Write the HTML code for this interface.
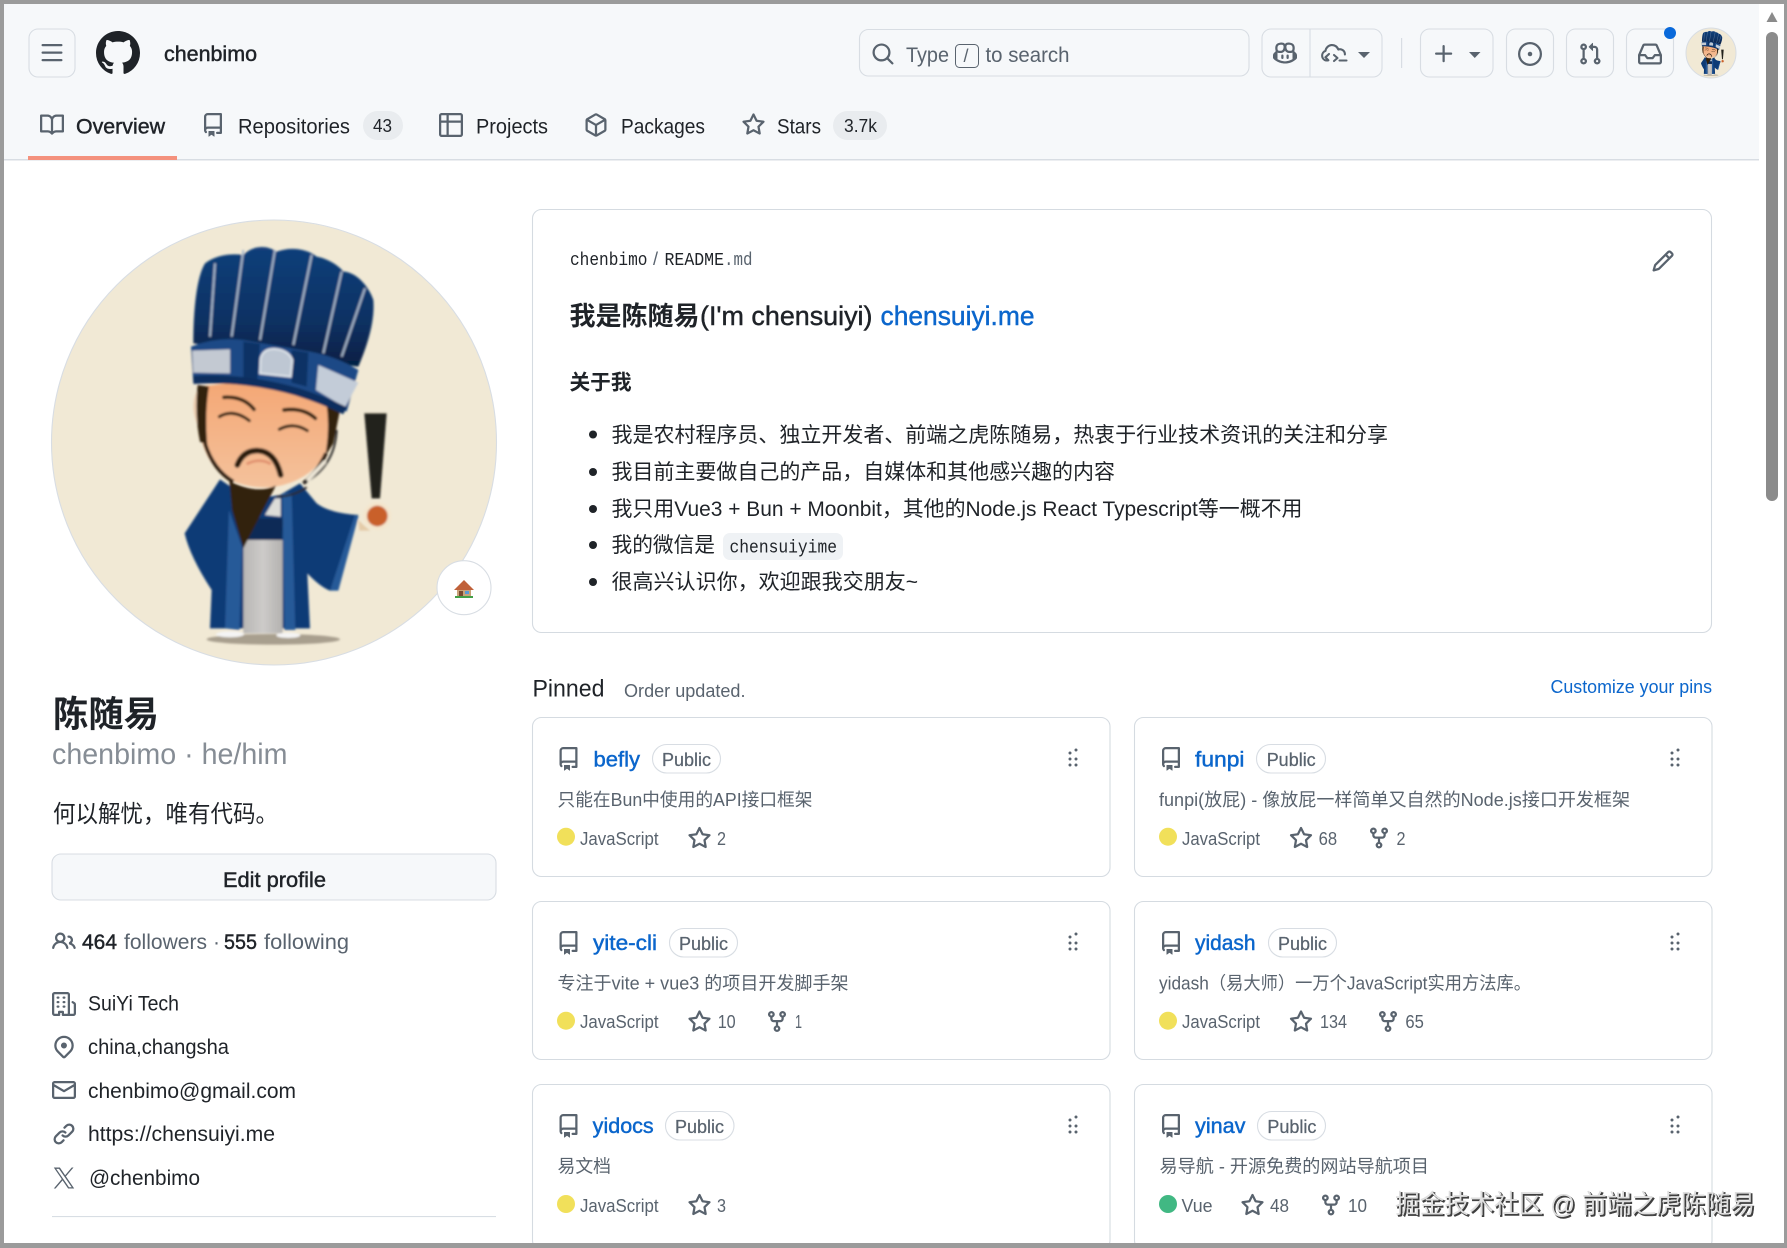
<!DOCTYPE html>
<html lang="zh"><head><meta charset="utf-8"><title>chenbimo</title>
<style>
html,body{margin:0;padding:0;background:#fff;width:1787px;height:1248px;overflow:hidden}
svg{display:block;filter:blur(.35px)}
text{font-family:"Liberation Sans","Noto Sans CJK SC",sans-serif;font-size:21px;fill:#1f2328}
.mono{font-family:"Liberation Mono","Noto Sans CJK SC",monospace;font-size:18px}
.s18{font-size:18px}
.mut{fill:#59636e}
.lnk{fill:#0b66cc}
.sb{stroke:#1f2328;stroke-width:.45}
.nm{fill:#0b66cc;stroke:#0b66cc;stroke-width:.45}
.pub{font-size:18px;fill:#59636e;stroke:#59636e;stroke-width:.25}
.box{fill:#f6f8fa;stroke:#d8dde3;stroke-width:1.1}
.card{fill:#fff;stroke:#d5dbe1;stroke-width:1.1}
.pill{fill:#fff;stroke:#d8dde3;stroke-width:1.1}
.ic{fill:#59636e}
</style></head><body>
<svg width="1787" height="1248" viewBox="0 0 1787 1248">
<defs>
<symbol id="i-mark" viewBox="0 0 16 16"><path d="M8 0c4.42 0 8 3.58 8 8a8.013 8.013 0 0 1-5.45 7.59c-.4.08-.55-.17-.55-.38 0-.27.01-1.13.01-2.2 0-.75-.25-1.23-.54-1.48 1.78-.2 3.65-.88 3.65-3.95 0-.88-.31-1.59-.82-2.15.08-.2.36-1.02-.08-2.12 0 0-.67-.22-2.2.82-.64-.18-1.32-.27-2-.27-.68 0-1.36.09-2 .27-1.53-1.03-2.2-.82-2.2-.82-.44 1.1-.16 1.92-.08 2.12-.51.56-.82 1.28-.82 2.15 0 3.06 1.86 3.75 3.64 3.95-.23.2-.44.55-.51 1.07-.46.21-1.61.55-2.33-.66-.15-.24-.6-.83-1.23-.82-.67.01-.27.38.01.53.34.19.73.9.82 1.13.16.45.68 1.31 2.69.94 0 .67.01 1.3.01 1.49 0 .21-.15.45-.55.38A7.995 7.995 0 0 1 0 8c0-4.42 3.58-8 8-8Z"/></symbol>
<symbol id="i-bars" viewBox="0 0 16 16"><path d="M1 2.75A.75.75 0 0 1 1.75 2h12.5a.75.75 0 0 1 0 1.5H1.75A.75.75 0 0 1 1 2.75Zm0 5A.75.75 0 0 1 1.75 7h12.5a.75.75 0 0 1 0 1.5H1.75A.75.75 0 0 1 1 7.75ZM1.75 12h12.5a.75.75 0 0 1 0 1.5H1.75a.75.75 0 0 1 0-1.5Z"/></symbol>
<symbol id="i-book" viewBox="0 0 16 16"><path d="M0 1.75A.75.75 0 0 1 .75 1h4.253c1.227 0 2.317.59 3 1.501A3.743 3.743 0 0 1 11.006 1h4.245a.75.75 0 0 1 .75.75v10.5a.75.75 0 0 1-.75.75h-4.507a2.25 2.25 0 0 0-1.591.659l-.622.621a.75.75 0 0 1-1.06 0l-.622-.621A2.25 2.25 0 0 0 5.258 13H.75a.75.75 0 0 1-.75-.75Zm7.251 10.324.004-5.073-.002-2.253A2.25 2.25 0 0 0 5.003 2.5H1.5v9h3.757a3.75 3.75 0 0 1 1.994.574ZM8.755 4.75l-.004 7.322a3.752 3.752 0 0 1 1.992-.572H14.5v-9h-3.495a2.25 2.25 0 0 0-2.25 2.25Z"/></symbol>
<symbol id="i-repo" viewBox="0 0 16 16"><path d="M2 2.5A2.5 2.5 0 0 1 4.5 0h8.75a.75.75 0 0 1 .75.75v12.5a.75.75 0 0 1-.75.75h-2.5a.75.75 0 0 1 0-1.5h1.75v-2h-8a1 1 0 0 0-.714 1.7.75.75 0 1 1-1.072 1.05A2.495 2.495 0 0 1 2 11.5Zm10.5-1h-8a1 1 0 0 0-1 1v6.708A2.486 2.486 0 0 1 4.5 9h8ZM5 12.25a.25.25 0 0 1 .25-.25h3.5a.25.25 0 0 1 .25.25v3.25a.25.25 0 0 1-.4.2l-1.45-1.087a.249.249 0 0 0-.3 0L5.4 15.7a.25.25 0 0 1-.4-.2Z"/></symbol>
<symbol id="i-table" viewBox="0 0 16 16"><path d="M0 1.75C0 .784.784 0 1.75 0h12.5C15.216 0 16 .784 16 1.75v12.5A1.75 1.75 0 0 1 14.25 16H1.75A1.75 1.75 0 0 1 0 14.25ZM6.5 6.5v8h7.75a.25.25 0 0 0 .25-.25V6.5Zm8-1.5V1.75a.25.25 0 0 0-.25-.25H6.5V5Zm-13 1.5v7.75c0 .138.112.25.25.25H5v-8ZM5 5V1.5H1.75a.25.25 0 0 0-.25.25V5Z"/></symbol>
<symbol id="i-pkg" viewBox="0 0 16 16"><path d="m8.878.392 5.25 3.045c.54.314.872.89.872 1.514v6.098a1.75 1.75 0 0 1-.872 1.514l-5.25 3.045a1.75 1.75 0 0 1-1.756 0l-5.25-3.045A1.75 1.75 0 0 1 1 11.049V4.951c0-.624.332-1.201.872-1.514L7.122.392a1.75 1.75 0 0 1 1.756 0ZM7.875 1.69l-4.63 2.685L8 7.133l4.755-2.758-4.63-2.685a.248.248 0 0 0-.25 0ZM2.5 5.677v5.372c0 .09.047.171.125.216l4.625 2.683V8.432Zm6.25 8.271 4.625-2.683a.25.25 0 0 0 .125-.216V5.677L8.75 8.432Z"/></symbol>
<symbol id="i-star" viewBox="0 0 16 16"><path d="M8 .25a.75.75 0 0 1 .673.418l1.882 3.815 4.21.612a.75.75 0 0 1 .416 1.279l-3.046 2.97.719 4.192a.751.751 0 0 1-1.088.791L8 12.347l-3.766 1.98a.75.75 0 0 1-1.088-.79l.72-4.194L.818 6.374a.75.75 0 0 1 .416-1.28l4.21-.611L7.327.668A.75.75 0 0 1 8 .25Zm0 2.445L6.615 5.5a.75.75 0 0 1-.564.41l-3.097.45 2.24 2.184a.75.75 0 0 1 .216.664l-.528 3.084 2.769-1.456a.75.75 0 0 1 .698 0l2.77 1.456-.53-3.084a.75.75 0 0 1 .216-.664l2.24-2.183-3.096-.45a.75.75 0 0 1-.564-.41L8 2.694Z"/></symbol>
<symbol id="i-search" viewBox="0 0 16 16"><path d="M10.68 11.74a6 6 0 0 1-7.922-8.982 6 6 0 0 1 8.982 7.922l3.04 3.04a.749.749 0 0 1-.326 1.275.749.749 0 0 1-.734-.215ZM11.5 7a4.499 4.499 0 1 0-8.997 0A4.499 4.499 0 0 0 11.5 7Z"/></symbol>
<symbol id="i-copilot" viewBox="0 0 16 16"><path d="M7.998 15.035c-4.562 0-7.873-2.914-7.998-3.749V9.338c.085-.628.677-1.686 1.588-2.065.013-.07.024-.143.036-.218.029-.183.06-.384.126-.612-.201-.508-.254-1.084-.254-1.656 0-.87.128-1.769.693-2.484.579-.733 1.494-1.124 2.724-1.261 1.206-.134 2.262.034 2.944.765.05.053.096.108.139.165.044-.057.094-.112.143-.165.682-.731 1.738-.899 2.944-.765 1.23.137 2.145.528 2.724 1.261.566.715.693 1.614.693 2.484 0 .572-.053 1.148-.254 1.656.066.228.098.429.126.612.012.076.024.148.037.218.924.385 1.522 1.471 1.591 2.095v1.872c0 .766-3.351 3.795-8.002 3.795Zm0-1.485c2.28 0 4.584-1.11 5.002-1.433V7.862l-.023-.116c-.49.21-1.075.291-1.727.291-1.146 0-2.059-.327-2.71-.991A3.222 3.222 0 0 1 8 6.303a3.24 3.24 0 0 1-.544.743c-.65.664-1.563.991-2.71.991-.652 0-1.236-.081-1.727-.291l-.023.116v4.255c.419.323 2.722 1.433 5.002 1.433ZM6.762 2.83c-.193-.206-.637-.413-1.682-.297-1.019.113-1.479.404-1.713.7-.247.312-.369.789-.369 1.554 0 .793.129 1.171.308 1.371.162.181.519.379 1.442.379.853 0 1.339-.235 1.638-.54.315-.322.527-.827.617-1.553.117-.935-.037-1.395-.241-1.614Zm4.155-.297c-1.044-.116-1.488.091-1.681.297-.204.219-.359.679-.242 1.614.091.726.303 1.231.618 1.553.299.305.784.54 1.638.54.922 0 1.28-.198 1.442-.379.179-.2.308-.578.308-1.371 0-.765-.123-1.242-.37-1.554-.233-.296-.693-.587-1.713-.7Z"/><path d="M6.25 9.037a.75.75 0 0 1 .75.75v1.501a.75.75 0 0 1-1.5 0V9.787a.75.75 0 0 1 .75-.75Zm4.25.75v1.501a.75.75 0 0 1-1.5 0V9.787a.75.75 0 0 1 1.5 0Z"/></symbol>
<symbol id="i-plus" viewBox="0 0 16 16"><path d="M7.75 2a.75.75 0 0 1 .75.75V7h4.25a.75.75 0 0 1 0 1.5H8.5v4.25a.75.75 0 0 1-1.5 0V8.5H2.75a.75.75 0 0 1 0-1.5H7V2.75A.75.75 0 0 1 7.75 2Z"/></symbol>
<symbol id="i-issue" viewBox="0 0 16 16"><path d="M8 9.5a1.5 1.5 0 1 0 0-3 1.5 1.5 0 0 0 0 3Z"/><path d="M8 0a8 8 0 1 1 0 16A8 8 0 0 1 8 0ZM1.5 8a6.5 6.5 0 1 0 13 0 6.5 6.5 0 0 0-13 0Z"/></symbol>
<symbol id="i-pr" viewBox="0 0 16 16"><path d="M1.5 3.25a2.25 2.25 0 1 1 3 2.122v5.256a2.251 2.251 0 1 1-1.5 0V5.372A2.25 2.25 0 0 1 1.5 3.25Zm5.677-.177L9.573.677A.25.25 0 0 1 10 .854V2.5h1A2.5 2.5 0 0 1 13.5 5v5.628a2.251 2.251 0 1 1-1.5 0V5a1 1 0 0 0-1-1h-1v1.646a.25.25 0 0 1-.427.177L7.177 3.427a.25.25 0 0 1 0-.354ZM3.75 2.5a.75.75 0 1 0 0 1.5.75.75 0 0 0 0-1.5Zm0 9.5a.75.75 0 1 0 0 1.5.75.75 0 0 0 0-1.5Zm8.25.75a.75.75 0 1 0 1.5 0 .75.75 0 0 0-1.5 0Z"/></symbol>
<symbol id="i-inbox" viewBox="0 0 16 16"><path d="M2.8 2.06A1.75 1.75 0 0 1 4.41 1h7.18c.7 0 1.333.417 1.61 1.06l2.74 6.395c.04.093.06.194.06.295v4.5A1.75 1.75 0 0 1 14.25 15H1.75A1.75 1.75 0 0 1 0 13.25v-4.5c0-.101.02-.202.06-.295Zm1.61.44a.25.25 0 0 0-.23.152L1.887 8H4.75a.75.75 0 0 1 .6.3L6.625 10h2.75l1.275-1.7a.75.75 0 0 1 .6-.3h2.863L11.82 2.652a.25.25 0 0 0-.23-.152Zm10.09 7h-2.875l-1.275 1.7a.75.75 0 0 1-.6.3h-3.5a.75.75 0 0 1-.6-.3L4.375 9.5H1.5v3.75c0 .138.112.25.25.25h12.5a.25.25 0 0 0 .25-.25Z"/></symbol>
<symbol id="i-people" viewBox="0 0 16 16"><path d="M2 5.5a3.5 3.5 0 1 1 5.898 2.549 5.508 5.508 0 0 1 3.034 4.084.75.75 0 1 1-1.482.235 4 4 0 0 0-7.9 0 .75.75 0 0 1-1.482-.236A5.507 5.507 0 0 1 3.102 8.05 3.493 3.493 0 0 1 2 5.5ZM11 4a3.001 3.001 0 0 1 2.22 5.018 5.01 5.01 0 0 1 2.56 3.012.749.749 0 0 1-.885.954.752.752 0 0 1-.549-.514 3.507 3.507 0 0 0-2.522-2.372.75.75 0 0 1-.574-.73v-.352a.75.75 0 0 1 .416-.672A1.5 1.5 0 0 0 11 5.5.75.75 0 0 1 11 4Zm-5.5-.5a2 2 0 1 0-.001 3.999A2 2 0 0 0 5.5 3.5Z"/></symbol>
<symbol id="i-org" viewBox="0 0 16 16"><path d="M1.75 16A1.75 1.75 0 0 1 0 14.25V1.75C0 .784.784 0 1.75 0h8.5C11.216 0 12 .784 12 1.75v12.5c0 .085-.006.168-.018.25h2.268a.25.25 0 0 0 .25-.25V8.285a.25.25 0 0 0-.111-.208l-1.055-.703a.749.749 0 1 1 .832-1.248l1.055.703c.487.325.779.871.779 1.456v5.965A1.75 1.75 0 0 1 14.25 16h-3.5a.766.766 0 0 1-.197-.026c-.099.017-.2.026-.303.026h-3a.75.75 0 0 1-.75-.75V14h-1v1.25a.75.75 0 0 1-.75.75Zm-.25-1.75c0 .138.112.25.25.25H4v-1.25a.75.75 0 0 1 .75-.75h2.5a.75.75 0 0 1 .75.75v1.25h2.25a.25.25 0 0 0 .25-.25V1.75a.25.25 0 0 0-.25-.25h-8.5a.25.25 0 0 0-.25.25ZM3.75 6h.5a.75.75 0 0 1 0 1.5h-.5a.75.75 0 0 1 0-1.5ZM3 3.75A.75.75 0 0 1 3.75 3h.5a.75.75 0 0 1 0 1.5h-.5A.75.75 0 0 1 3 3.75Zm4 3A.75.75 0 0 1 7.75 6h.5a.75.75 0 0 1 0 1.5h-.5A.75.75 0 0 1 7 6.75ZM7.75 3h.5a.75.75 0 0 1 0 1.5h-.5a.75.75 0 0 1 0-1.5ZM3 9.75A.75.75 0 0 1 3.75 9h.5a.75.75 0 0 1 0 1.5h-.5A.75.75 0 0 1 3 9.75ZM7.75 9h.5a.75.75 0 0 1 0 1.5h-.5a.75.75 0 0 1 0-1.5Z"/></symbol>
<symbol id="i-loc" viewBox="0 0 16 16"><path d="m12.596 11.596-3.535 3.536a1.5 1.5 0 0 1-2.122 0l-3.535-3.536a6.5 6.5 0 1 1 9.192-9.193 6.5 6.5 0 0 1 0 9.193Zm-1.06-8.132v-.001a5 5 0 1 0-7.072 7.072L8 14.07l3.536-3.534a5 5 0 0 0 0-7.072ZM8 9a2 2 0 1 1-.001-3.999A2 2 0 0 1 8 9Z"/></symbol>
<symbol id="i-mail" viewBox="0 0 16 16"><path d="M1.75 2h12.5c.966 0 1.75.784 1.75 1.75v8.5A1.75 1.75 0 0 1 14.25 14H1.75A1.75 1.75 0 0 1 0 12.25v-8.5C0 2.784.784 2 1.75 2ZM1.5 12.251c0 .138.112.25.25.25h12.5a.25.25 0 0 0 .25-.25V5.809L8.38 9.397a.75.75 0 0 1-.76 0L1.5 5.809v6.442Zm13-8.181v-.32a.25.25 0 0 0-.25-.25H1.75a.25.25 0 0 0-.25.25v.32L8 7.88Z"/></symbol>
<symbol id="i-link" viewBox="0 0 16 16"><path d="m7.775 3.275 1.25-1.25a3.5 3.5 0 1 1 4.95 4.95l-2.5 2.5a3.5 3.5 0 0 1-4.95 0 .751.751 0 0 1 .018-1.042.751.751 0 0 1 1.042-.018 1.998 1.998 0 0 0 2.83 0l2.5-2.5a2.002 2.002 0 0 0-2.83-2.83l-1.25 1.25a.751.751 0 0 1-1.042-.018.751.751 0 0 1-.018-1.042Zm-4.69 9.64a1.998 1.998 0 0 0 2.83 0l1.25-1.25a.751.751 0 0 1 1.042.018.751.751 0 0 1 .018 1.042l-1.25 1.25a3.5 3.5 0 1 1-4.95-4.95l2.5-2.5a3.5 3.5 0 0 1 4.95 0 .751.751 0 0 1-.018 1.042.751.751 0 0 1-1.042.018 1.998 1.998 0 0 0-2.83 0l-2.5 2.5a1.998 1.998 0 0 0 0 2.83Z"/></symbol>
<symbol id="i-x" viewBox="0 0 16 16"><path d="M9.294 6.928 14.357 1h-1.2L8.762 6.147 5.25 1H1.2l5.31 7.784L1.2 15h1.2l4.642-5.436L10.751 15h4.05L9.294 6.928ZM7.651 8.852l-.538-.775L2.832 1.91h1.843l3.454 4.977.538.775 4.491 6.47h-1.843l-3.664-5.28Z"/></symbol>
<symbol id="i-pen" viewBox="0 0 16 16"><path d="M11.013 1.427a1.75 1.75 0 0 1 2.474 0l1.086 1.086a1.75 1.75 0 0 1 0 2.474l-8.61 8.61c-.21.21-.47.364-.756.445l-3.251.93a.75.75 0 0 1-.927-.928l.929-3.25c.081-.286.235-.547.445-.758l8.61-8.61Zm.176 4.823L9.75 4.81l-6.286 6.287a.253.253 0 0 0-.064.108l-.558 1.953 1.953-.558a.253.253 0 0 0 .108-.064Zm1.238-3.763a.25.25 0 0 0-.354 0L10.811 3.75l1.439 1.44 1.263-1.263a.25.25 0 0 0 0-.354Z"/></symbol>
<symbol id="i-grab" viewBox="0 0 16 16"><path d="M10 13a1 1 0 1 1 0-2 1 1 0 0 1 0 2Zm0-4a1 1 0 1 1 0-2 1 1 0 0 1 0 2Zm-4 0a1 1 0 1 1 0-2 1 1 0 0 1 0 2Zm1 3a1 1 0 1 1-2 0 1 1 0 0 1 2 0Zm3-9a1 1 0 1 1 0-2 1 1 0 0 1 0 2ZM6 5a1 1 0 1 1 0-2 1 1 0 0 1 0 2Z"/></symbol>
<symbol id="i-fork" viewBox="0 0 16 16"><path d="M5 5.372v.878c0 .414.336.75.75.75h4.5a.75.75 0 0 0 .75-.75v-.878a2.25 2.25 0 1 1 1.5 0v.878a2.25 2.25 0 0 1-2.25 2.25h-1.5v2.128a2.251 2.251 0 1 1-1.5 0V8.5h-1.5A2.25 2.25 0 0 1 3.5 6.25v-.878a2.25 2.25 0 1 1 1.5 0ZM5 3.25a.75.75 0 1 0-1.5 0 .75.75 0 0 0 1.5 0Zm6.75.75a.75.75 0 1 0 0-1.5.75.75 0 0 0 0 1.5Zm-3 8.75a.75.75 0 1 0-1.5 0 .75.75 0 0 0 1.5 0Z"/></symbol>
<linearGradient id="hatg" x1="0" y1="0" x2="0" y2="1"><stop offset="0" stop-color="#123f7a"/><stop offset=".6" stop-color="#0c3264"/><stop offset="1" stop-color="#061f44"/></linearGradient>
<linearGradient id="shirt" x1="0" y1="0" x2="1" y2="0"><stop offset="0" stop-color="#b8b6b4"/><stop offset=".5" stop-color="#cdcbc9"/><stop offset="1" stop-color="#b3b1af"/></linearGradient>
<linearGradient id="skin" x1="0" y1="0" x2="0" y2="1"><stop offset="0" stop-color="#f4a775"/><stop offset="1" stop-color="#f4c29c"/></linearGradient>
<filter id="soft"><feGaussianBlur stdDeviation="3"/></filter>
<g id="avatar">
<circle cx="732" cy="728" r="667" fill="#f1e9d5"/>
<g filter="url(#soft)">
<ellipse cx="730" cy="1318" rx="200" ry="16" fill="#a89f8e"/>
<path d="M570 838L464 1000Q480 1070 545 1170L540 1285L840 1285L832 1120Q870 1160 900 1172L925 1170L985 945Q900 940 860 910L810 850L750 885L660 900Z" fill="#103b76"/>
<rect x="640" y="1020" width="118" height="280" fill="url(#shirt)"/>
<path d="M705 945L735 895L752 895L752 950Z" fill="#dcdcd8"/>
<path d="M660 955L760 955L755 1020L645 1020Z" fill="#0a2a56"/>
<path d="M597 930L636 1040L628 1290L585 1285Z" fill="#285a98"/>
<path d="M757 880L785 880L796 1290L764 1290Z" fill="#285a98"/>
<path d="M975 945L985 950L925 1172L900 1172Z" fill="#285a98"/>
<ellipse cx="600" cy="1303" rx="42" ry="9" fill="#f4f4f4"/><ellipse cx="775" cy="1306" rx="36" ry="8" fill="#f4f4f4"/>
<path d="M985 960Q1010 985 1022 992L988 992Z" fill="#e4cba8"/>
<path d="M505 565Q472 620 512 695Z" fill="#ecccae"/>
<path d="M510 560L510 700Q530 800 600 840Q680 875 760 855Q850 830 885 760Q920 700 920 630L800 570L640 545Z" fill="url(#skin)"/>
<path d="M503 555L537 560Q524 640 532 735L510 725Q493 640 503 555Z" fill="#33200f"/>
<path d="M930 630L910 730L885 770Q900 690 890 618Z" fill="#33200f"/>
<path d="M525 730Q550 810 610 845M888 760Q860 820 820 850" fill="none" stroke="#2a1a0e" stroke-width="11"/>
<path d="M598 843Q680 885 738 856L640 1045L606 930Z" fill="#33200f"/>
<path d="M582 592Q640 588 672 628M762 630Q820 622 856 655" fill="none" stroke="#33200f" stroke-width="11" stroke-linecap="round"/>
<path d="M568 650Q610 625 658 662M748 688Q790 665 832 692" fill="none" stroke="#33200f" stroke-width="9" stroke-linecap="round"/>
<path d="M650 792Q690 772 722 792" fill="none" stroke="#e0906e" stroke-width="8"/>
<path d="M622 795Q640 750 685 752Q735 755 752 825" fill="none" stroke="#2a1a0e" stroke-width="17" stroke-linecap="round"/>
<path d="M920 690Q915 800 820 850M740 890Q790 890 830 862" fill="none" stroke="#2a2a2a" stroke-width="6"/>
<path d="M885 785L832 842" fill="none" stroke="#efe8d8" stroke-width="11"/>
<path d="M490 430C490 330 500 230 525 190C560 165 600 160 640 165C670 135 710 135 740 155C780 140 830 145 860 170C890 175 925 195 940 215C975 215 1015 255 1030 300C1035 360 1015 430 985 500L490 430Z" fill="url(#hatg)"/>
<path d="M555 190L540 410M640 150L605 410M735 150L690 420M845 165L790 435M935 215L880 460M1005 265L935 470" fill="none" stroke="#a9b8cb" stroke-width="6"/>
<path d="M483 440Q560 410 640 420L840 455Q920 470 985 510L950 635Q800 560 640 545Q560 540 490 550Z" fill="#1c4a86"/>
<path d="M640 425L690 432L682 540L640 540ZM785 450L835 458L830 560L785 548Z" fill="#0f3365"/>
<path d="M487 452L600 448L600 520L490 518Z" fill="#c3c9d2"/>
<path d="M690 520L692 475Q700 445 735 447Q775 450 787 480L782 530Z" fill="#bec7d3" stroke="#dfe4ea" stroke-width="6"/>
<path d="M865 495L985 548L945 622L858 570Z" fill="#c3ccd8"/>
<path d="M490 540Q640 530 800 575Q880 600 945 632" fill="none" stroke="#0e2f5f" stroke-width="24"/>
<path d="M1003 640L1070 640L1050 895L1025 895Z" fill="#22211e"/>
<circle cx="1042" cy="948" r="42" fill="#f4e6cd"/><circle cx="1042" cy="948" r="31" fill="#c9602a"/>
</g>
</g>
</defs>

<!-- window frame & header -->
<rect width="1787" height="1248" fill="#fff"/>
<rect x="4" y="4" width="1755" height="155" fill="#f6f8fa"/>
<rect x="4" y="159" width="1755" height="1.5" fill="#d8dde3"/>

<rect class="box" x="29" y="29" width="46" height="48" rx="9"/>
<use href="#i-bars" x="40" y="41" width="24" height="24" class="ic"/>
<use href="#i-mark" x="96" y="31" width="44" height="44" fill="#1f2328"/>
<text x="164" y="61" textLength="93" lengthAdjust="spacingAndGlyphs" class="sb">chenbimo</text>

<use href="#i-book" x="40" y="113" width="24" height="24" class="ic"/>
<text x="76" y="133.5" textLength="89" lengthAdjust="spacingAndGlyphs" class="sb">Overview</text>
<rect x="28" y="156" width="149" height="4" fill="#f4917d"/>
<use href="#i-repo" x="201" y="113" width="24" height="24" class="ic"/>
<text x="238" y="133.5" textLength="112" lengthAdjust="spacingAndGlyphs">Repositories</text>
<rect x="363" y="111" width="40" height="29" rx="14.5" fill="#e9ecef"/>
<text class="s18" x="373" y="132" textLength="19" lengthAdjust="spacingAndGlyphs">43</text>
<use href="#i-table" x="439" y="113" width="24" height="24" class="ic"/>
<text x="476" y="133.5" textLength="72" lengthAdjust="spacingAndGlyphs">Projects</text>
<use href="#i-pkg" x="584" y="113" width="24" height="24" class="ic"/>
<text x="621" y="133.5" textLength="84" lengthAdjust="spacingAndGlyphs">Packages</text>
<use href="#i-star" x="741.5" y="113" width="24" height="24" class="ic"/>
<text x="777" y="133.5" textLength="44" lengthAdjust="spacingAndGlyphs">Stars</text>
<rect x="833" y="111" width="54" height="29" rx="14.5" fill="#e9ecef"/>
<text class="s18" x="844" y="132" textLength="33" lengthAdjust="spacingAndGlyphs">3.7k</text>

<rect class="box" x="859.5" y="29.5" width="389.5" height="46.5" rx="9"/>
<use href="#i-search" x="871" y="42" width="24" height="24" class="ic"/>
<text class="mut" x="906" y="62" textLength="43" lengthAdjust="spacingAndGlyphs">Type</text>
<rect x="955.5" y="44.5" width="23" height="23" rx="4" fill="none" stroke="#59636e" stroke-width="1"/>
<text class="mut s18" x="963.5" y="62">/</text>
<text class="mut" x="985.5" y="62" textLength="84" lengthAdjust="spacingAndGlyphs">to search</text>

<rect class="box" x="1262" y="29" width="120" height="48" rx="9"/>
<line x1="1310" y1="29" x2="1310" y2="77" stroke="#d8dde3" stroke-width="1.1"/>
<use href="#i-copilot" x="1273" y="41" width="24" height="24" class="ic"/>
<path d="M1328 60.5h-2a5 5 0 0 1-.5-9.6a6.6 6.6 0 0 1 12.8-1.4a5 5 0 0 1 6.6 5M1329 54l-3.6 3.3 3 3M1334 55l3.5 3-3.5 3M1339.5 60.5h7" fill="none" stroke="#59636e" stroke-width="2.1" stroke-linecap="round" stroke-linejoin="round"/>
<path d="M1358 52h12l-6 6z" fill="#59636e"/>
<rect x="1401" y="38" width="1.2" height="30" fill="#d8dde3"/>
<rect class="box" x="1420.5" y="29" width="72.5" height="48" rx="9"/>
<use href="#i-plus" x="1432" y="42" width="24" height="24" class="ic"/>
<path d="M1469 52h11.5l-5.75 6z" fill="#59636e"/>
<rect class="box" x="1506.5" y="29" width="47" height="48" rx="9"/>
<use href="#i-issue" x="1518" y="42" width="24" height="24" class="ic"/>
<rect class="box" x="1566.5" y="29" width="47" height="48" rx="9"/>
<use href="#i-pr" x="1578" y="42" width="24" height="24" class="ic"/>
<rect class="box" x="1626.5" y="29" width="47" height="48" rx="9"/>
<use href="#i-inbox" x="1638" y="42" width="24" height="24" class="ic"/>
<circle cx="1670" cy="33" r="6" fill="#0969da"/>
<use href="#avatar" transform="translate(1683.6 25.7) scale(.03746)"/>
<circle cx="1711" cy="53" r="25" fill="none" stroke="#d8dde3" stroke-width="1"/>

<!-- sidebar -->
<use href="#avatar" transform="translate(30 200) scale(.33333)"/>
<circle cx="274" cy="442.5" r="222.5" fill="none" stroke="#d8dde3" stroke-width="1.1"/>
<circle cx="464" cy="587.7" r="27" fill="#fff" stroke="#d8dde3" stroke-width="1.1"/>
<path d="M457 589h14v8h-14z" fill="#c9a37a"/><path d="M464 580l10 10h-20z" fill="#c0613a"/><rect x="459" y="591" width="4" height="6" fill="#7a4a30"/><rect x="465" y="591" width="4" height="3" fill="#5a9bd5"/><rect x="455" y="596" width="18" height="2" fill="#43a047"/>

<text x="53" y="726.5" font-weight="700" style="font-size:36px" textLength="106" lengthAdjust="spacingAndGlyphs">陈随易</text>
<text x="52" y="764" style="font-size:30px;fill:#868d95" textLength="235.5" lengthAdjust="spacingAndGlyphs">chenbimo · he/him</text>
<text x="53" y="822" style="font-size:24px" textLength="225" lengthAdjust="spacingAndGlyphs">何以解忧，唯有代码。</text>
<rect class="box" x="52" y="854" width="444" height="46" rx="9"/>
<text x="223" y="887" textLength="103" lengthAdjust="spacingAndGlyphs" class="sb">Edit profile</text>
<use href="#i-people" x="52" y="929.5" width="24" height="24" class="ic"/>
<text x="82" y="949" textLength="35" lengthAdjust="spacingAndGlyphs" class="sb">464</text>
<text class="mut" x="124" y="949" textLength="83" lengthAdjust="spacingAndGlyphs">followers</text>
<text class="mut" x="213" y="949">·</text>
<text x="224" y="949" textLength="33" lengthAdjust="spacingAndGlyphs" class="sb">555</text>
<text class="mut" x="264" y="949" textLength="85" lengthAdjust="spacingAndGlyphs">following</text>
<use href="#i-org" x="52" y="992" width="24" height="24" class="ic"/>
<text x="88" y="1010.5" textLength="91" lengthAdjust="spacingAndGlyphs">SuiYi Tech</text>
<use href="#i-loc" x="52" y="1035" width="24" height="24" class="ic"/>
<text x="88" y="1054" textLength="141" lengthAdjust="spacingAndGlyphs">china,changsha</text>
<use href="#i-mail" x="52" y="1078" width="24" height="24" class="ic"/>
<text x="88" y="1098" textLength="208" lengthAdjust="spacingAndGlyphs">chenbimo@gmail.com</text>
<use href="#i-link" x="52" y="1122" width="24" height="24" class="ic"/>
<text x="88" y="1141" textLength="187" lengthAdjust="spacingAndGlyphs">https://chensuiyi.me</text>
<use href="#i-x" x="52" y="1166" width="24" height="24" class="ic"/>
<text x="89" y="1185" textLength="111" lengthAdjust="spacingAndGlyphs">@chenbimo</text>
<rect x="52" y="1216" width="444" height="1.1" fill="#d8dee4"/>

<!-- README -->
<rect class="card" x="532.5" y="209.5" width="1179" height="423" rx="9"/>
<text class="mono" x="570" y="265" textLength="77.5" lengthAdjust="spacingAndGlyphs">chenbimo</text>
<text x="653" y="265" class="s18 mut">/</text>
<text class="mono" x="664.5" y="265" textLength="59.5" lengthAdjust="spacingAndGlyphs">README</text>
<text class="mono" x="724" y="265" style="fill:#59636e" textLength="28.5" lengthAdjust="spacingAndGlyphs">.md</text>
<use href="#i-pen" x="1651" y="249" width="24" height="24" class="ic"/>
<text x="569.5" y="325" font-weight="700" style="font-size:26px" textLength="130" lengthAdjust="spacingAndGlyphs">我是陈随易</text>
<text x="700" y="325" style="font-size:27px" class="sb" textLength="172.5" lengthAdjust="spacingAndGlyphs">(I'm chensuiyi)</text>
<text x="880.5" y="325" style="font-size:27px" class="nm" textLength="154" lengthAdjust="spacingAndGlyphs">chensuiyi.me</text>
<text x="569.5" y="389.5" font-weight="700" textLength="62" lengthAdjust="spacingAndGlyphs">关于我</text>
<circle cx="593" cy="434.5" r="4" fill="#1f2328"/><circle cx="593" cy="472" r="4" fill="#1f2328"/><circle cx="593" cy="509" r="4" fill="#1f2328"/><circle cx="593" cy="545" r="4" fill="#1f2328"/><circle cx="593" cy="582" r="4" fill="#1f2328"/>
<text x="611.5" y="442" textLength="776.5" lengthAdjust="spacingAndGlyphs">我是农村程序员、独立开发者、前端之虎陈随易，热衷于行业技术资讯的关注和分享</text>
<text x="611.5" y="479" textLength="503.5" lengthAdjust="spacingAndGlyphs">我目前主要做自己的产品，自媒体和其他感兴趣的内容</text>
<text x="611.5" y="516" textLength="691" lengthAdjust="spacingAndGlyphs">我只用Vue3 + Bun + Moonbit，其他的Node.js React Typescript等一概不用</text>
<text x="611.5" y="552" textLength="103.5" lengthAdjust="spacingAndGlyphs">我的微信是</text>
<rect x="723" y="533" width="120" height="27" rx="7" fill="#eff2f5"/>
<text class="mono" x="729.5" y="552.5" textLength="107.5" lengthAdjust="spacingAndGlyphs">chensuiyime</text>
<text x="611.5" y="589" textLength="306.5" lengthAdjust="spacingAndGlyphs">很高兴认识你，欢迎跟我交朋友~</text>

<!-- pinned heading -->
<text x="532.5" y="696.5" style="font-size:24px" textLength="72" lengthAdjust="spacingAndGlyphs">Pinned</text>
<text class="s18 mut" x="624" y="697" textLength="121.5" lengthAdjust="spacingAndGlyphs">Order updated.</text>
<text class="s18 lnk" x="1550.5" y="693" textLength="161.5" lengthAdjust="spacingAndGlyphs">Customize your pins</text>

<!-- row 1 -->
<rect class="card" x="532.5" y="717.5" width="577.5" height="159" rx="9"/>
<use href="#i-repo" x="556.5" y="747" width="24" height="24" class="ic"/>
<text x="593.5" y="766.5" class="nm" textLength="46.5" lengthAdjust="spacingAndGlyphs">befly</text>
<rect class="pill" x="652.5" y="744.5" width="68" height="28.5" rx="14.25"/>
<text class="pub" x="662" y="766" textLength="49" lengthAdjust="spacingAndGlyphs">Public</text>
<use href="#i-grab" x="1061" y="747" width="24" height="24" class="ic"/>
<text class="s18 mut" x="557.5" y="806" textLength="255" lengthAdjust="spacingAndGlyphs">只能在Bun中使用的API接口框架</text>
<circle cx="566" cy="836.7" r="9" fill="#f1e05a"/>
<text class="s18 mut" x="580" y="845" textLength="78.5" lengthAdjust="spacingAndGlyphs">JavaScript</text>
<use href="#i-star" x="687.5" y="826.5" width="24" height="24" class="ic"/>
<text class="s18 mut" x="717" y="845" textLength="9" lengthAdjust="spacingAndGlyphs">2</text>

<rect class="card" x="1134.5" y="717.5" width="577.5" height="159" rx="9"/>
<use href="#i-repo" x="1159" y="747" width="24" height="24" class="ic"/>
<text x="1195" y="766.5" class="nm" textLength="49.5" lengthAdjust="spacingAndGlyphs">funpi</text>
<rect class="pill" x="1256.5" y="744.5" width="69" height="28.5" rx="14.25"/>
<text class="pub" x="1266.7" y="766" textLength="49" lengthAdjust="spacingAndGlyphs">Public</text>
<use href="#i-grab" x="1663" y="747" width="24" height="24" class="ic"/>
<text class="s18 mut" x="1159" y="806" textLength="471" lengthAdjust="spacingAndGlyphs">funpi(放屁) - 像放屁一样简单又自然的Node.js接口开发框架</text>
<circle cx="1168" cy="836.7" r="9" fill="#f1e05a"/>
<text class="s18 mut" x="1182" y="845" textLength="78" lengthAdjust="spacingAndGlyphs">JavaScript</text>
<use href="#i-star" x="1289" y="826.5" width="24" height="24" class="ic"/>
<text class="s18 mut" x="1318.6" y="845" textLength="18.5" lengthAdjust="spacingAndGlyphs">68</text>
<use href="#i-fork" x="1367" y="826" width="24" height="24" class="ic"/>
<text class="s18 mut" x="1396.5" y="845" textLength="9" lengthAdjust="spacingAndGlyphs">2</text>

<!-- row 2 -->
<rect class="card" x="532.5" y="901.5" width="577.5" height="158" rx="9"/>
<use href="#i-repo" x="556.5" y="931" width="24" height="24" class="ic"/>
<text x="593" y="950" class="nm" textLength="64" lengthAdjust="spacingAndGlyphs">yite-cli</text>
<rect class="pill" x="669.5" y="928.5" width="68" height="28.5" rx="14.25"/>
<text class="pub" x="679" y="950" textLength="49" lengthAdjust="spacingAndGlyphs">Public</text>
<use href="#i-grab" x="1061" y="931" width="24" height="24" class="ic"/>
<text class="s18 mut" x="557.5" y="989.5" textLength="291" lengthAdjust="spacingAndGlyphs">专注于vite + vue3 的项目开发脚手架</text>
<circle cx="566" cy="1020.7" r="9" fill="#f1e05a"/>
<text class="s18 mut" x="580" y="1028" textLength="78.5" lengthAdjust="spacingAndGlyphs">JavaScript</text>
<use href="#i-star" x="687.5" y="1010" width="24" height="24" class="ic"/>
<text class="s18 mut" x="717.7" y="1028" textLength="18" lengthAdjust="spacingAndGlyphs">10</text>
<use href="#i-fork" x="765" y="1009.5" width="24" height="24" class="ic"/>
<text class="s18 mut" x="795" y="1028" textLength="7" lengthAdjust="spacingAndGlyphs">1</text>

<rect class="card" x="1134.5" y="901.5" width="577.5" height="158" rx="9"/>
<use href="#i-repo" x="1159" y="931" width="24" height="24" class="ic"/>
<text x="1195" y="950" class="nm" textLength="60.5" lengthAdjust="spacingAndGlyphs">yidash</text>
<rect class="pill" x="1268.5" y="928.5" width="68" height="28.5" rx="14.25"/>
<text class="pub" x="1278" y="950" textLength="49" lengthAdjust="spacingAndGlyphs">Public</text>
<use href="#i-grab" x="1663" y="931" width="24" height="24" class="ic"/>
<text class="s18 mut" x="1159" y="989.5" textLength="372" lengthAdjust="spacingAndGlyphs">yidash（易大师）一万个JavaScript实用方法库。</text>
<circle cx="1168" cy="1020.7" r="9" fill="#f1e05a"/>
<text class="s18 mut" x="1182" y="1028" textLength="78" lengthAdjust="spacingAndGlyphs">JavaScript</text>
<use href="#i-star" x="1289" y="1010" width="24" height="24" class="ic"/>
<text class="s18 mut" x="1320" y="1028" textLength="27" lengthAdjust="spacingAndGlyphs">134</text>
<use href="#i-fork" x="1376" y="1009.5" width="24" height="24" class="ic"/>
<text class="s18 mut" x="1405.4" y="1028" textLength="18.5" lengthAdjust="spacingAndGlyphs">65</text>

<!-- row 3 -->
<rect class="card" x="532.5" y="1084.5" width="577.5" height="165" rx="9"/>
<use href="#i-repo" x="556.5" y="1114" width="24" height="24" class="ic"/>
<text x="592.7" y="1133" class="nm" textLength="61" lengthAdjust="spacingAndGlyphs">yidocs</text>
<rect class="pill" x="665.5" y="1111.5" width="68.5" height="28.5" rx="14.25"/>
<text class="pub" x="675" y="1133" textLength="49" lengthAdjust="spacingAndGlyphs">Public</text>
<use href="#i-grab" x="1061" y="1114" width="24" height="24" class="ic"/>
<text class="s18 mut" x="557.5" y="1172.5" textLength="53.5" lengthAdjust="spacingAndGlyphs">易文档</text>
<circle cx="566" cy="1204" r="9" fill="#f1e05a"/>
<text class="s18 mut" x="580" y="1212" textLength="78.5" lengthAdjust="spacingAndGlyphs">JavaScript</text>
<use href="#i-star" x="687.5" y="1193.5" width="24" height="24" class="ic"/>
<text class="s18 mut" x="717" y="1212" textLength="9" lengthAdjust="spacingAndGlyphs">3</text>

<rect class="card" x="1134.5" y="1084.5" width="577.5" height="165" rx="9"/>
<use href="#i-repo" x="1159" y="1114" width="24" height="24" class="ic"/>
<text x="1195" y="1133" class="nm" textLength="50.5" lengthAdjust="spacingAndGlyphs">yinav</text>
<rect class="pill" x="1257.5" y="1111.5" width="68" height="28.5" rx="14.25"/>
<text class="pub" x="1267.4" y="1133" textLength="49" lengthAdjust="spacingAndGlyphs">Public</text>
<use href="#i-grab" x="1663" y="1114" width="24" height="24" class="ic"/>
<text class="s18 mut" x="1159.5" y="1172.5" textLength="269.5" lengthAdjust="spacingAndGlyphs">易导航 - 开源免费的网站导航项目</text>
<circle cx="1168" cy="1204" r="9" fill="#41b883"/>
<text class="s18 mut" x="1181.5" y="1212" textLength="31" lengthAdjust="spacingAndGlyphs">Vue</text>
<use href="#i-star" x="1240.5" y="1193.5" width="24" height="24" class="ic"/>
<text class="s18 mut" x="1270" y="1212" textLength="19" lengthAdjust="spacingAndGlyphs">48</text>
<use href="#i-fork" x="1319" y="1193" width="24" height="24" class="ic"/>
<text class="s18 mut" x="1348" y="1212" textLength="19" lengthAdjust="spacingAndGlyphs">10</text>

<!-- watermark -->
<text x="1396.5" y="1214.5" style="font-size:26px;fill:#3f3f3f;stroke:#3f3f3f;stroke-width:.5" textLength="360" lengthAdjust="spacingAndGlyphs">掘金技术社区 @ 前端之虎陈随易</text>
<text x="1395" y="1213" style="font-size:26px;fill:#dedede" textLength="360" lengthAdjust="spacingAndGlyphs">掘金技术社区 @ 前端之虎陈随易</text>

<!-- scrollbar -->
<rect x="1759" y="4" width="25" height="1240" fill="#fff"/>
<path d="M1772 12l5.5 10h-11z" fill="#8b8b8b"/>
<rect x="1766" y="32" width="12" height="469" rx="6" fill="#8b8b8b"/>

<!-- window border -->
<rect x="0" y="0" width="1787" height="4" fill="#9b9b9b"/>
<rect x="0" y="0" width="4" height="1248" fill="#9b9b9b"/>
<rect x="1784" y="0" width="3" height="1248" fill="#9b9b9b"/>
<rect x="0" y="1243" width="1787" height="5" fill="#9b9b9b"/>
</svg>
</body></html>
